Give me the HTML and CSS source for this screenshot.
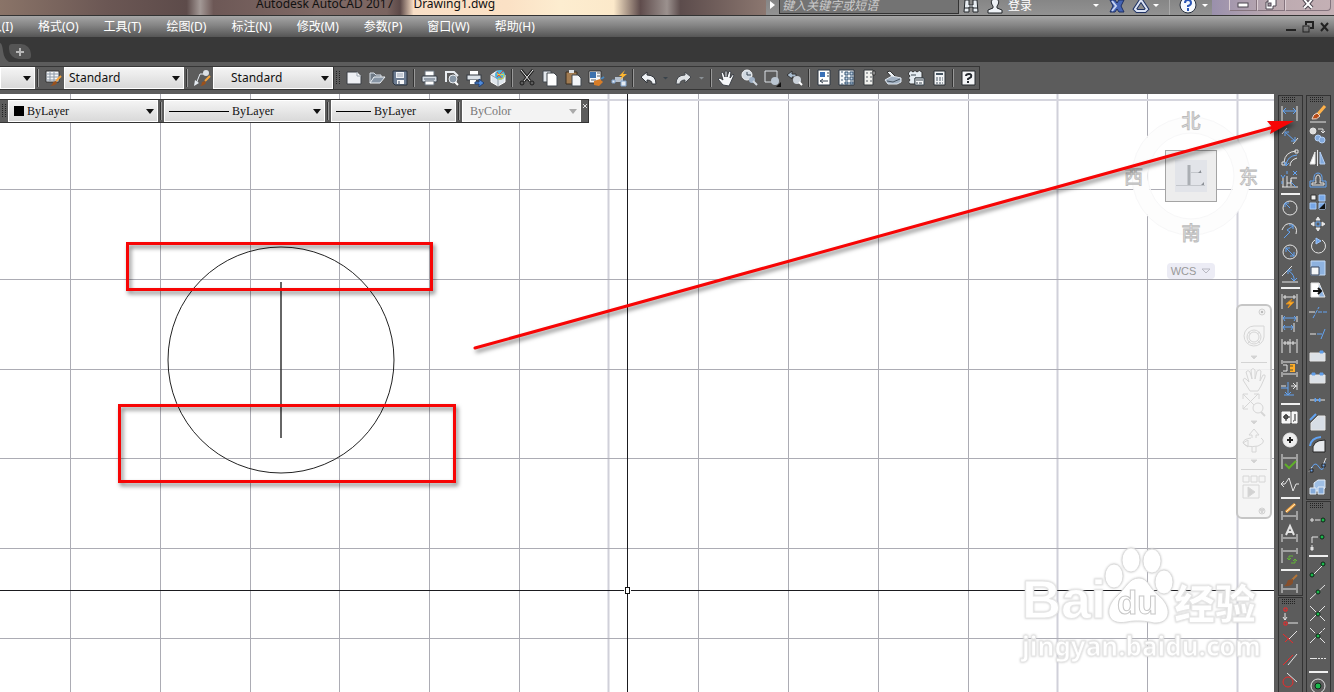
FILE: index.html
```html
<!DOCTYPE html>
<html lang="zh-CN">
<head>
<meta charset="utf-8">
<title>Autodesk AutoCAD 2017 - Drawing1.dwg</title>
<link rel="stylesheet" href="styles.css">
</head>
<body>
<div class="app">
  <header class="titlebar">
    <div class="caption"><span>Autodesk AutoCAD 2017</span><span>Drawing1.dwg</span></div>
    <div class="infocenter">
      <button class="expand" aria-label="展开"><svg width="5" height="8"><path d="M0 0L5 4L0 8z" fill="#fff"/></svg></button>
      <input class="search" type="text" placeholder="键入关键字或短语" aria-label="键入关键字或短语">
      <button class="info" aria-label="搜索"><svg width="16" height="16" viewBox="0 0 16 16"><path d="M2 2h4v5h4V2h4l1 12h-5V9H6v5H1z" fill="#e8edf2" stroke="#23272b"/><path d="M1 10h5M10 10h5" stroke="#23272b"/></svg></button>
      <button class="info login"><svg width="16" height="16" viewBox="0 0 16 16"><path d="M8 1c5 0 4 5 2 7v2l5 2v3H1v-3l5-2V8C4 6 3 1 8 1z" fill="#eef2f6" stroke="#23272b"/></svg><span>登录</span></button>
      <i class="caret push"></i>
      <button class="info" aria-label="Exchange"><svg width="18" height="16" viewBox="0 0 18 16"><path d="M2 2h5l2 3 2-3h5l-3 6 3 6h-5l-2-3-2 3H2l3-6z" fill="#4564b4" stroke="#1e2f61"/><path d="M4 3l4 5-4 5" stroke="#c4d2f2" stroke-width="2" fill="none"/></svg></button>
      <button class="info" aria-label="A360"><svg width="18" height="16" viewBox="0 0 18 16"><path d="M9 2l6 9-2 2H5l-2-2z" fill="none" stroke="#203364" stroke-width="4"/><path d="M9 2l6 9-2 2H5l-2-2z" fill="none" stroke="#dce4f5" stroke-width="2"/></svg></button>
      <i class="caret"></i><i class="rule"></i>
      <button class="info" aria-label="帮助"><svg width="18" height="18" viewBox="0 0 18 18"><circle cx="9" cy="8" r="8" fill="#f6f9fd" stroke="#27303e"/><path d="M6 6q0-3 3-3t3 3q0 2-3 3v1M9 11v3" fill="none" stroke="#2a55b5" stroke-width="2"/></svg></button>
      <i class="caret"></i>
    </div>
    <div class="window-buttons">
      <button aria-label="最小化"><svg width="12" height="8"><rect x="1" y="2" width="10" height="4" fill="#fff" stroke="#4d4650"/></svg></button>
      <button aria-label="还原"><svg width="14" height="12"><path d="M4 0h8v7H9v3H2V3h2z" fill="#fff" stroke="#4d4650"/><rect x="4" y="4" width="3" height="3" fill="#a99aa6" stroke="#4d4650"/></svg></button>
      <button class="wide" aria-label="关闭"><svg width="14" height="12"><path d="M3 9l4-4 4 4M3 0l4 5 4-5" fill="none" stroke="#4d4650" stroke-width="4"/><path d="M3 9l4-4 4 4M3 0l4 5 4-5" fill="none" stroke="#fff" stroke-width="2"/></svg></button>
    </div>
  </header>

  <nav class="menubar">
    <a class="cut" href="#">插入(I)</a><a href="#">格式(O)</a><a href="#">工具(T)</a><a href="#">绘图(D)</a><a href="#">标注(N)</a><a href="#">修改(M)</a><a href="#">参数(P)</a><a href="#">窗口(W)</a><a href="#">帮助(H)</a>
    <div class="doc-buttons">
      <button aria-label="最小化"><svg width="12" height="12"><path d="M1 9h10" stroke="#222" stroke-width="2"/></svg></button>
      <button aria-label="还原"><svg width="12" height="12"><path d="M4 4V1h7v6H8" fill="none" stroke="#222" stroke-width="2"/><rect x="1" y="5" width="6" height="6" fill="none" stroke="#222"/></svg></button>
      <button aria-label="关闭"><svg width="12" height="12"><path d="M2 2l7 8M9 2l-7 8" stroke="#222" stroke-width="2"/></svg></button>
    </div>
  </nav>

  <div class="tabs">
    <svg class="tab-edge" width="9" height="25"><path d="M0 6q2 0 3 8t6 11H0z" fill="#5c5c5c"/></svg>
    <button class="new-tab" aria-label="新图形"><svg width="10" height="10"><path d="M5 1v8M1 5h8" stroke="#b8b8b8" stroke-width="2"/></svg></button>
  </div>

  <div class="toolbar">
    <div class="styles-bar">
      <div class="combo stub"><select aria-label="标注样式"><option></option></select></div>
      <i class="sep"></i>
      <button class="tool" aria-label="表格样式"><svg viewBox="0 0 18 18"><path d="M2 2h13v11H2z" fill="#f3f5f7" stroke="#333"/><path d="M2 5h13M2 8h13M2 11h13M6 2v11M10 2v11" stroke="#8c98a5"/><path d="M17 7l-5 5" stroke="#f5a33c" stroke-width="2"/><path d="M6 17q3-1 3-4l3-1 1 2q-2 3-7 3z" fill="#9a511c"/></svg></button>
      <div class="combo text"><select aria-label="表格样式"><option>Standard</option></select></div>
      <i class="sep"></i>
      <button class="tool" aria-label="多重引线样式"><svg viewBox="0 0 18 18"><path d="M3 15L7 5h4" fill="none" stroke="#e6ecf2" stroke-width="1"/><path d="M1 17l1-6 4 3z" fill="#e6ecf2"/><circle cx="13" cy="4" r="3" fill="#dbe0e5"/><path d="M17 7l-5 5" stroke="#f5a33c" stroke-width="2"/><path d="M7 17q2-1 2-4l3-1 1 2q-2 3-6 3z" fill="#9a511c"/></svg></button>
      <div class="combo text indent"><select aria-label="多重引线样式"><option>Standard</option></select></div>
    </div>
    <div class="standard-bar">
      <i class="grip"></i>
      <button class="tool" aria-label="新建"><svg viewBox="0 0 18 18"><path d="M2 3h10l4 4v8H2z" fill="#eef0f4" stroke="#3a3f45"/><path d="M12 3v4h4" fill="#fff" stroke="#9ca5b0"/></svg></button>
      <button class="tool" aria-label="打开"><svg viewBox="0 0 18 18"><path d="M2 14V4h4l2 2h5v3" fill="#6f7a86" stroke="#d6dde5"/><path d="M2 14l4-6h11l-5 6z" fill="#8795a5" stroke="#eef2f6"/></svg></button>
      <button class="tool" aria-label="保存"><svg viewBox="0 0 18 18"><path d="M2 2h14v14H4l-2-2z" fill="#6c7c92" stroke="#26303d"/><path d="M5 3h8v6H5z" fill="#eef1f5"/><path d="M6 5h6M6 7h6" stroke="#98a3b2"/><path d="M6 11h7v4H6z" fill="#f5f7f9"/><path d="M8 12v3" stroke="#34435a"/></svg></button>
      <i class="sep"></i>
      <button class="tool" aria-label="打印"><svg viewBox="0 0 18 18"><path d="M5 2h9v5H5z" fill="#fff" stroke="#66717d"/><rect x="2" y="7" width="15" height="6" rx="1" fill="#d5dce4" stroke="#343a42"/><path d="M5 12h9v4H5z" fill="#fff" stroke="#66717d"/><path d="M4 10h11" stroke="#536172"/></svg></button>
      <button class="tool" aria-label="打印预览"><svg viewBox="0 0 18 18"><path d="M3 13V3h8l4 4" fill="none" stroke="#e9edf1" stroke-width="2"/><circle cx="10" cy="10" r="4" fill="#8796a5" stroke="#e9edf1"/><path d="M12 13l3 3" stroke="#fff" stroke-width="2"/></svg></button>
      <button class="tool" aria-label="发布"><svg viewBox="0 0 18 18"><path d="M4 2h8v4H4z" fill="#fff"/><rect x="1" y="6" width="14" height="5" fill="#dce2e8" stroke="#343a42"/><path d="M4 11h6v4H4z" fill="#fff"/><path d="M9 13h4v-3l5 4-5 4v-3H9z" fill="#4f8bdc" stroke="#203f73"/></svg></button>
      <button class="tool" aria-label="三维打印"><svg viewBox="0 0 18 18"><path d="M2 6l6-4 8 4v7l-7 4-7-4z" fill="#dfe6ed" stroke="#fff"/><path d="M2 6l7 4v7" fill="none" stroke="#8e9aa6"/><circle cx="11" cy="6" r="5" fill="#49b1dd"/><path d="M8 3l5 7M14 2l-6 6" stroke="#e9442b"/><path d="M9 10q6 1 6-4M8 5q3 2 7 0" fill="none" stroke="#f6dd32"/></svg></button>
      <i class="sep"></i>
      <button class="tool" aria-label="剪切"><svg viewBox="0 0 18 18"><path d="M3 1l9 11M15 1L6 12" stroke="#222" stroke-width="3"/><path d="M3 1l9 11M15 1L6 12" stroke="#eee"/><circle cx="4" cy="14" r="2" fill="none" stroke="#1d1d1d" stroke-width="1"/><circle cx="14" cy="14" r="2" fill="none" stroke="#1d1d1d" stroke-width="1"/></svg></button>
      <button class="tool" aria-label="复制"><svg viewBox="0 0 18 18"><path d="M2 2h8v11H2z" fill="#e2e7ec" stroke="#41464c"/><path d="M6 4h7l3 3v10H6z" fill="#fff" stroke="#41464c"/></svg></button>
      <button class="tool" aria-label="粘贴"><svg viewBox="0 0 18 18"><path d="M2 3h11v12H2z" fill="#a27c52" stroke="#3b2e20"/><path d="M5 1h5v3H5z" fill="#dde1e5"/><path d="M8 6h6l3 3v8H8z" fill="#f3f5f8" stroke="#41464c"/></svg></button>
      <button class="tool" aria-label="特性匹配"><svg viewBox="0 0 18 18"><path d="M2 2h12v12H2z" fill="#f4f6f8" stroke="#333"/><path d="M3 3h6v6H3z" fill="#3b71ae"/><path d="M10 4h3M10 7h3M4 11h5" stroke="#56606a"/><path d="M7 12l6-2 3 3-4 4-5-1z" fill="#d77d28"/><path d="M14 10l3-2" stroke="#4b88bf" stroke-width="2"/></svg></button>
      <button class="tool" aria-label="块编辑器"><svg viewBox="0 0 18 18"><path d="M5 8h8v5H5z" fill="#b5c0cd"/><path d="M2 11h3v3H2zM11 12h5v5h-5z" fill="#e4eaf1" stroke="#7fa0c9"/><path d="M15 1l-6 6h3l-2 4 7-6h-4z" fill="#ffb62f"/></svg></button>
      <i class="sep"></i>
      <button class="tool" aria-label="放弃"><svg viewBox="0 0 18 18"><path d="M2 8l6-5v3q9 0 9 9h-4q0-4-5-4v3z" fill="#f0f3f6" stroke="#30343a"/></svg></button>
      <button class="drop" aria-label="放弃列表"><i class="caret dark"></i></button>
      <button class="tool" aria-label="重做"><svg viewBox="0 0 18 18"><path d="M16 8l-6-5v3q-9 0-9 9h4q0-4 5-4v3z" fill="#dfe2e5" stroke="#44484d"/></svg></button>
      <button class="drop" aria-label="重做列表"><i class="caret dim"></i></button>
      <i class="sep"></i>
      <button class="tool" aria-label="平移"><svg viewBox="0 0 18 18"><path d="M6 16l-5-6 2-1 3 2-2-7 2-1 2 5V2h2v6l2-6 2 1-1 6 3-4 1 1-4 9-1 2z" fill="#f5f7f9" stroke="#3d4147"/></svg></button>
      <button class="tool" aria-label="实时缩放"><svg viewBox="0 0 18 18"><circle cx="7" cy="6" r="5" fill="#d2dae2" stroke="#f5f7f9"/><path d="M7 3v3h4" stroke="#394653" fill="none"/><circle cx="12" cy="11" r="3" fill="#9fb1c6"/><path d="M13 12l4 4" stroke="#d4dae1" stroke-width="2"/></svg></button>
      <button class="tool" aria-label="窗口缩放"><svg viewBox="0 0 18 18"><path d="M2 2h12v11H2z" fill="none" stroke="#dbe0e6"/><circle cx="12" cy="12" r="4" fill="#bac5d1"/><path d="M18 13v5h-5z" fill="#111"/></svg></button>
      <button class="tool" aria-label="缩放上一个"><svg viewBox="0 0 18 18"><path d="M1 6l5-4v3h4v3H6v2z" fill="#a9bccf" stroke="#333"/><circle cx="11" cy="11" r="4" fill="#cbd2da"/><path d="M13 13l3 3" stroke="#fff" stroke-width="2"/></svg></button>
      <i class="sep"></i>
      <button class="tool" aria-label="特性"><svg viewBox="0 0 18 18"><path d="M3 1h12v15H3z" fill="#fff" stroke="#2d3743"/><path d="M5 3h5v5H5z" fill="#3970b7"/><path d="M12 4h2M12 7h2M6 12h7M5 12l3-2M5 12l3 2" stroke="#384452"/></svg></button>
      <button class="tool" aria-label="设计中心"><svg viewBox="0 0 18 18"><path d="M1 1h15v15H1z" fill="#f5f7f9" stroke="#2d3743"/><path d="M4 2v14" stroke="#49637d" stroke-dasharray="2 2"/><path d="M7 3h3v3H7zM12 3h3v3h-3zM7 8h3v3H7zM12 8h3v3h-3zM7 13h3v2H7zM12 13h3v2h-3z" fill="#c6d7e9" stroke="#345371"/></svg></button>
      <button class="tool" aria-label="工具选项板"><svg viewBox="0 0 18 18"><path d="M3 1h9v15H3z" fill="#f1f1ed" stroke="#35393d"/><path d="M5 3h2v2H5zM9 3h2v2H9zM5 7h2v2H5zM9 7h2v2H9zM5 11h2v2H5zM9 11h2v2H9z" fill="#a3a6a8"/><path d="M12 2h2v4h-2z" fill="#ddd" stroke="#333"/></svg></button>
      <button class="tool" aria-label="图纸集管理器"><svg viewBox="0 0 18 18"><path d="M3 3l3-1 7 7-3 2z" fill="#eef2f5" stroke="#333"/><path d="M1 11l7-4 9 2v4l-4 2H4z" fill="#a1b0c1" stroke="#e1e7ee"/><path d="M3 12l6 1 7-3" fill="none" stroke="#44515e"/></svg></button>
      <button class="tool" aria-label="标记集管理器"><svg viewBox="0 0 18 18"><path d="M2 3q2-3 4 0 2-3 4 0 2-3 5 0v6H8v6H3q-3-2 0-4-3-2 0-4-3-2-1-4z" fill="#e5ecf2" stroke="#333"/><path d="M8 9h9v7H8z" fill="#f5f6f8" stroke="#38444f"/><path d="M9 11h7M9 14h2M12 14h3M4 6h5" stroke="#38444f"/></svg></button>
      <button class="tool" aria-label="快速计算器"><svg viewBox="0 0 18 18"><path d="M4 2h11v14H4z" fill="#f1f3f5" stroke="#292e34"/><path d="M6 5h7" stroke="#465562" stroke-width="2"/><path d="M6 9h7M6 11h7M6 14h7" stroke="#465562" stroke-dasharray="2 1"/></svg></button>
      <i class="sep"></i>
      <button class="tool" aria-label="帮助"><svg viewBox="0 0 18 18"><path d="M3 2h13v14H3z" fill="#f4f5f7" stroke="#24282d" stroke-width="1"/><path d="M7 7q0-2 3-2t2 3l-3 2v1M9 12v2" fill="none" stroke="#252a30" stroke-width="2"/></svg></button>
    </div>
  </div>

  <main class="workspace">
    <section class="canvas" aria-label="绘图区">
      <svg class="drawing">
        <g transform="translate(0 -94)">
          <g stroke="#acacb4">
            <path d="M70.500 94v1200M160.500 94v1200M250.500 94v1200M339.500 94v1200M429.500 94v1200M519.500 94v1200M698.500 94v1200M788.500 94v1200M878.500 94v1200M968.500 94v1200M1147.500 94v1200"/>
            <path d="M608.500 94v1200M1057.500 94v1200M1237.500 94v1200" stroke="#d0d0d9" stroke-width="2"/>
            <path d="M0 189.500h3000M0 279.500h3000M0 369.500h3000M0 458.500h3000M0 548.500h3000M0 638.500h3000"/>
            <path d="M0 100h3000" stroke="#d6d6de" stroke-width="2"/>
          </g>
          <path d="M627.500 94V587M627.500 594v1000M0 590.500h624M631 590.500h3000" stroke="#1b1b1f"/>
          <rect x="625.500" y="587.500" width="4" height="6" fill="#fff" stroke="#111"/>
          <circle cx="281" cy="360" r="113" fill="none" stroke="#222" stroke-width="1"/>
          <path d="M281 282v156" stroke="#333" stroke-width="1.500"/>
        </g>
      </svg>

      <div class="properties-bar">
        <i class="grip"></i>
        <div class="combo prop color"><span class="swatch"></span><select aria-label="颜色"><option>ByLayer</option></select></div>
        <i class="sep"></i>
        <div class="combo prop linetype"><span class="stroke"></span><select aria-label="线型"><option>ByLayer</option></select></div>
        <i class="sep"></i>
        <div class="combo prop weight"><span class="stroke short"></span><select aria-label="线宽"><option>ByLayer</option></select></div>
        <i class="sep"></i>
        <div class="combo prop plot"><select aria-label="打印样式" disabled><option>ByColor</option></select></div>
        <button class="close" aria-label="关闭"><svg width="6" height="6"><path d="M1 1l4 4M5 1l-4 4" stroke="#ddd"/></svg></button>
      </div>

      <div class="viewcube">
        <svg class="ring" viewBox="0 0 120 120"><circle cx="60" cy="60" r="51" fill="none" stroke="#fdfdfd" stroke-width="15"/><circle cx="60" cy="60" r="59" fill="none" stroke="#f7f7f8"/><circle cx="60" cy="60" r="43" fill="none" stroke="#f7f7f8"/></svg>
        <button class="north">北</button><button class="west">西</button>
        <button class="top" aria-label="上"><svg viewBox="0 0 32 32"><path d="M14 5v20" stroke="#aaaeb3" stroke-width="3"/><path d="M16 12.500h11M1 25.500h29" stroke="#c3c6cb"/><path d="M23 13l3-3v3zM26 25l3-3v3z" fill="#8b8f95"/></svg></button>
        <button class="east">东</button><button class="south">南</button>
        <button class="wcs">WCS <svg width="10" height="6"><path d="M1 1h8L5 5z" fill="none" stroke="#b9b9c2"/></svg></button>
      </div>

      <div class="navbar">
        <button class="mini" aria-label="关闭"><svg width="8" height="8"><circle cx="4" cy="4" r="3" fill="#eee" stroke="#d2d2d2"/><path d="M3 3l2 2M5 3L3 5" stroke="#bbb"/></svg></button>
        <button aria-label="全导航控制盘"><svg width="24" height="42" viewBox="0 0 24 42"><path d="M12 9h10v11a10 10 0 1 1-10-11z"/><circle cx="12" cy="20" r="7"/><circle cx="12" cy="20" r="5"/><path d="M6 15l3 2M15 23l3 3M18 15l-3 2M9 23l-3 3"/><path class="solid" d="M9 39h6l-3 3z"/></svg></button>
        <hr>
        <button aria-label="平移"><svg width="24" height="27" viewBox="0 0 24 27"><path d="M8 25L1 14q1-3 3-1l3 3L4 6q2-3 4 0l2 7-1-9q2-3 4 0v9l2-8q3-2 4 0l-1 10 3-6q3-1 2 2l-4 9-3 5z"/></svg></button>
        <button aria-label="缩放"><svg width="24" height="32" viewBox="0 0 24 32"><path d="M1 6V1h5M12 1h5v5M1 12v4h5M1 1l15 15M16 1L1 16"/><circle cx="16" cy="15" r="5"/><path d="M19 19l4 4" stroke-width="2"/><path class="solid" d="M9 28h6l-3 3z"/></svg></button>
        <button aria-label="动态观察"><svg width="24" height="41" viewBox="0 0 24 41"><path d="M12 4l5 6h-3v17h-4V10H7z"/><path d="M9 13q-8 1-8 5 3 5 15 3 9-4 3-8M1 18l5-3v7z"/><path class="solid" d="M9 35h6l-3 3z"/></svg></button>
        <hr>
        <button aria-label="ShowMotion"><svg width="24" height="28" viewBox="0 0 24 28"><path d="M1 3h6v6H1zM9 3h6v6H9zM17 3h6v6h-6zM1 12h16v13H1z"/><path class="solid" d="M6 14l7 5-7 5z"/></svg></button>
        <button class="mini bottom" aria-label="自定义"><svg width="8" height="8"><circle cx="4" cy="4" r="3" fill="#eee" stroke="#d2d2d2"/><path d="M2 3h4M3 5h2" stroke="#bbb"/></svg></button>
      </div>

      <div class="watermark">
        <div class="brand"><span class="latin">Bai</span><span class="paw"><svg viewBox="0 0 72 80"><ellipse cx="12" cy="30" rx="9" ry="12"/><ellipse cx="29" cy="14" rx="9" ry="12"/><ellipse cx="50" cy="15" rx="9" ry="12"/><ellipse cx="62" cy="36" rx="9" ry="12"/><path d="M37 32c9 0 10 10 19 17 15 12 13 29-4 28-8-2-18-3-27-1C4 80 2 62 15 50c9-8 12-18 22-18z"/></svg><b>du</b></span><span class="cn">经验</span></div>
        <div class="url">jingyan.baidu.com</div>
      </div>
    </section>

    <aside class="docks">
      <div class="dock">
        <div class="panel">
          <i class="grip wide"></i>
          <button aria-label="线性"><svg viewBox="0 0 22 22"><path d="M3 3v15M18 3v15"/><path class="b" d="M4 8h13M7 5L4 8l3 3M14 5l3 3-3 3"/></svg></button>
          <button aria-label="对齐"><svg viewBox="0 0 22 22"><path d="M3 9l5-6M14 19l5-6"/><path class="b" d="M6 7l10 9M6 11V7h4M16 12v4h-4"/></svg></button>
          <button aria-label="弧长"><svg viewBox="0 0 22 22"><path d="M5 15Q6 5 17 4M11 19q0-6 7-8"/><path d="M3 15h3v3H3zM16 3h3v3h-3z"/><path class="b" d="M7 18Q8 9 18 8M5 15l2 4 3-3"/></svg></button>
          <button aria-label="坐标"><svg viewBox="0 0 22 22"><path d="M4 18V9M8 18V7M3 18h16M8 14h4v-3M12 17V9h6"/><path class="b" d="M2 6l2 3 2-3M14 2l4 4M18 2l-4 4M8 2v3M3 12v3M12 13l5 5"/></svg></button>
          <hr>
          <button aria-label="半径"><svg viewBox="0 0 22 22"><circle cx="11" cy="11" r="7"/><path class="b" d="M6 6l5 5M6 10V6h4"/></svg></button>
          <button aria-label="折弯"><svg viewBox="0 0 22 22"><path d="M3 11q3-8 10-6 6 3 4 10"/><path class="b" d="M5 19l6-6-3-2 6-4M10 6h4v4"/></svg></button>
          <button aria-label="直径"><svg viewBox="0 0 22 22"><circle cx="11" cy="11" r="7"/><path class="b" d="M7 7l8 8M7 11V7h4M15 11v4h-4"/></svg></button>
          <button aria-label="角度"><svg viewBox="0 0 22 22"><path d="M3 19h16M3 13L13 3"/><path class="b" d="M10 8q6 4 5 10M9 11V7h4M12 15l3 3 3-3"/></svg></button>
          <hr>
          <button aria-label="快速标注"><svg viewBox="0 0 22 22"><path d="M3 3v15M18 3v15M4 6h13M6 4v4M15 4v4"/><path d="M13 8l-6 5h4l-2 4 6-6h-4z" fill="#ffad29" stroke="#d68a20"/></svg></button>
          <button aria-label="基线"><svg viewBox="0 0 22 22"><path d="M3 2v17M18 3v6M15 10v9"/><path class="b" d="M4 5h13M6 3L4 5l2 3M15 3l2 2-2 3M4 14h10M6 12l-2 2 2 3M12 12l2 2-2 3"/></svg></button>
          <button aria-label="连续"><svg viewBox="0 0 22 22"><path d="M3 4v14M11 4v14M18 4v14M4 8h13M6 6v4M9 6v4M14 6v4"/></svg></button>
          <button aria-label="等距标注"><svg viewBox="0 0 22 22"><path d="M3 3v4M18 3v4M3 15v5M18 15v5M4 5h13M4 17h13M4 8h4v6H4"/><path d="M12 8h3v6h-3z" fill="#ffad29" stroke="#ffad29" stroke-width="2"/><path d="M11 9h3M11 13h3" stroke="#553"/></svg></button>
          <button aria-label="折断标注"><svg viewBox="0 0 22 22"><path d="M2 7h5M12 7h6M14 4l3 3-3 3M18 3v8"/><path class="b" d="M9 3v13M2 9h7M5 16h10M6 13l3 3 3-3"/></svg></button>
          <hr>
          <button aria-label="公差"><svg viewBox="0 0 22 22"><path d="M3 5h8v11H3zM13 5h5v11h-5z" fill="#f4f4f4" stroke="#fff"/><path d="M7 7v7M4 10h7M16 7v7M14 14h1" stroke="#222"/><circle cx="7" cy="10" r="2" stroke="#222"/></svg></button>
          <button aria-label="圆心标记"><svg viewBox="0 0 22 22"><circle cx="11" cy="11" r="7" fill="#eee"/><path d="M11 8v6M8 11h6" stroke="#222" stroke-width="2"/></svg></button>
          <button aria-label="检验"><svg viewBox="0 0 22 22"><path d="M3 3v15M18 3v15M4 7h13"/><path d="M6 13l4 4 7-7" stroke="#5fae29" stroke-width="2"/></svg></button>
          <button aria-label="折弯线性"><svg viewBox="0 0 22 22"><path d="M2 11h4l4-6 4 13 3-7h3M5 8l-3 3 3 3"/></svg></button>
          <hr>
          <button aria-label="编辑标注"><svg viewBox="0 0 22 22"><path d="M3 10v9M18 10v9M4 15h13"/><path d="M7 11l9-8" stroke="#f4a03a" stroke-width="3"/><path d="M7 11l9-8" stroke="#fff1cc"/></svg></button>
          <button aria-label="编辑标注文字"><svg viewBox="0 0 22 22"><path d="M3 11v8M18 11v8M4 15h13"/><path d="M7 12l4-9 4 9M8 9h6" stroke-width="2"/></svg></button>
          <button aria-label="标注更新"><svg viewBox="0 0 22 22"><path d="M3 3v15M18 3v6M4 6h13"/><path d="M14 11h-4v4M12 18h4v-4M8 13l2 2 2-2M14 16l2-2 2 2" stroke="#62b338"/></svg></button>
          <hr>
          <button aria-label="标注样式"><svg viewBox="0 0 22 22"><path d="M3 11v9M18 11v9M4 16h13"/><path d="M12 8l6-6" stroke="#b37539" stroke-width="2"/><path d="M5 13q3-2 4-6l5-1v4q-3 4-9 3z" fill="#874f2b" stroke="none"/></svg></button>
        </div>
        <div class="panel">
          <i class="grip wide"></i>
          <button aria-label="临时追踪点"><svg viewBox="0 0 22 22"><path d="M6 8v7M4 12l2 3 2-3M9 18h10"/><path class="r" d="M5 3h3v3H5zM5 17h3v3H5z"/></svg></button>
          <button aria-label="捕捉自"><svg viewBox="0 0 22 22"><path d="M10 12l8-8"/><path class="r" d="M4 7l10 9M6 15l4-4"/></svg></button>
          <button aria-label="端点"><svg viewBox="0 0 22 22"><path d="M9 16L18 5"/><path class="r" d="M4 16l10-10"/></svg></button>
          <button aria-label="中点"><svg viewBox="0 0 22 22"><path d="M8 2l10 9"/><circle class="r" cx="9" cy="11" r="5"/></svg></button>
        </div>
      </div>
      <div class="dock">
        <div class="panel">
          <i class="grip wide"></i>
          <button aria-label="删除"><svg viewBox="0 0 22 22"><path d="M3 19h16"/><path d="M11 11l7-8" stroke="#ffb14a" stroke-width="3"/><path d="M5 16q1-5 5-6l3 3q-3 4-8 3z" fill="#b94b17" stroke="#e9d8cd"/></svg></button>
          <button aria-label="复制"><svg viewBox="0 0 22 22"><circle cx="6" cy="6" r="3" fill="#ddd"/><circle cx="11" cy="13" r="3" fill="#82a9dc" stroke="#b6d0f4"/><circle cx="15" cy="15" r="3" fill="#82a9dc" stroke="#b6d0f4"/><path d="M11 4h5v4M14 6l2 2 2-2"/></svg></button>
          <button aria-label="镜像"><svg viewBox="0 0 22 22"><path d="M8 5v12H3z" fill="#fff"/><path d="M13 5v12h5z" fill="#82a9dc" stroke="#b6d0f4"/><path d="M10.500 3v16"/></svg></button>
          <button aria-label="偏移"><svg viewBox="0 0 22 22"><path class="b" d="M3 18v-6h4q-1-8 4-8t4 8h4v6z"/><path d="M5 16v-2h4q-1-8 2-8t2 8h4v2z"/></svg></button>
          <button aria-label="阵列"><svg viewBox="0 0 22 22"><path d="M4 4h5v5H4z" fill="#eee" stroke="#333"/><path d="M12 4h6v6h-6zM3 12h6v6H3zM12 12h6v6h-6z" fill="#77a6e5" stroke="#a9caf5"/><path d="M18 12v6h-6z" fill="#111" stroke="none"/></svg></button>
          <button aria-label="移动"><svg viewBox="0 0 22 22"><path d="M11 4l2 3H9zM11 18l2-3H9zM4 11l3-2v4zM18 11l-3-2v4z" fill="#eee"/><path class="b" d="M9 9h4v4H9z"/></svg></button>
          <button aria-label="旋转"><svg viewBox="0 0 22 22"><path d="M8 5a7 7 0 1 0 7 0"/><path d="M9 3l5 3-5 3z" fill="#6ea2e8" stroke="#9fc4f6"/></svg></button>
          <button aria-label="缩放"><svg viewBox="0 0 22 22"><path d="M4 4h14v14H4z" fill="#8eb2df" stroke="#c5dcf7"/><path d="M4 10h8v8H4z" fill="#f4f6f8" stroke="#34435a"/></svg></button>
          <button aria-label="拉伸"><svg viewBox="0 0 22 22"><path d="M4 4h8v14H4z" fill="#fff"/><path d="M12 4l6 14h-6z" fill="#8eb2df"/><path d="M6 12h8M11 9l3 3-3 3" stroke="#111" stroke-width="2"/></svg></button>
          <button aria-label="修剪"><svg viewBox="0 0 22 22"><path d="M2 11h6"/><path class="b" d="M6 17l6-11M11 11h10" stroke-dasharray="4 1"/></svg></button>
          <button aria-label="延伸"><svg viewBox="0 0 22 22"><path d="M3 11h6"/><path class="b" d="M10 11h5M14 16l4-10"/></svg></button>
          <button aria-label="打断于点"><svg viewBox="0 0 22 22"><path d="M3 8h15v8H3z" fill="#dce1e7"/><path d="M13 6h3v2h-3z" fill="#609ee9" stroke="#609ee9"/></svg></button>
          <button aria-label="打断"><svg viewBox="0 0 22 22"><path d="M3 8h15v8H3z" fill="#dce1e7"/><path d="M5 6h3v2H5zM13 6h3v2h-3z" fill="#609ee9" stroke="#609ee9"/></svg></button>
          <button aria-label="合并"><svg viewBox="0 0 22 22"><path d="M3 11h15"/><path d="M8 9l2 2-2 2zM13 9l-2 2 2 2z" fill="#609ee9" stroke="#609ee9"/></svg></button>
          <button aria-label="倒角"><svg viewBox="0 0 22 22"><path d="M4 19v-7l7-7h7v14z" fill="#d7dde5"/><path class="b" d="M3 9l6-6" stroke-width="2"/></svg></button>
          <button aria-label="圆角"><svg viewBox="0 0 22 22"><path d="M6 19q-2-12 12-12v12z" fill="#e5e8ec" stroke="#222"/><path class="b" d="M3 13Q4 5 14 4" stroke-width="2"/></svg></button>
          <button aria-label="光顺曲线"><svg viewBox="0 0 22 22"><path class="b" d="M4 14q4-9 8-2t6-5"/><path d="M2 17l3-5M16 10l3-7"/><path d="M3 14h3v3H3zM15 9h3v3h-3z" fill="#71a4e6" stroke="#222"/></svg></button>
          <button aria-label="分解"><svg viewBox="0 0 22 22"><path d="M7 6l4-3h7v8l-4 3H7z" fill="#9fbfe5" stroke="#e3edf8"/><path d="M3 11h6v6H3zM11 10h6v7h-6z" fill="#86abd9" stroke="#e3edf8"/></svg></button>
        </div>
        <div class="panel">
          <i class="grip wide"></i>
          <button aria-label="延长线"><svg viewBox="0 0 22 22"><path d="M4 10h2v2H4zM8 11h6"/><circle class="g" cx="16" cy="11" r="2"/></svg></button>
          <button aria-label="追踪"><svg viewBox="0 0 22 22"><path d="M5 6h9M5 6v9" stroke-dasharray="6 2"/><path d="M4 16h2v3H4z" fill="#ddd"/><circle class="g" cx="15" cy="6" r="2"/></svg></button>
          <hr>
          <button aria-label="端点捕捉"><svg viewBox="0 0 22 22"><path d="M6 16L16 6"/><circle class="g" cx="5" cy="16" r="2"/><circle class="g" cx="16" cy="5" r="2"/></svg></button>
          <button aria-label="中点捕捉"><svg viewBox="0 0 22 22"><path d="M3 18L18 4"/><circle class="g" cx="11" cy="11" r="2"/></svg></button>
          <button aria-label="交点"><svg viewBox="0 0 22 22"><path d="M3 3l15 15M3 18L18 3"/><circle class="g" cx="11" cy="11" r="2"/></svg></button>
          <button aria-label="外观交点"><svg viewBox="0 0 22 22"><path d="M3 3l5 5M13 13l5 5M3 18L18 3" stroke-dasharray="8 1"/><circle class="g" cx="11" cy="11" r="2"/></svg></button>
          <button aria-label="延长"><svg viewBox="0 0 22 22"><path d="M3 11.500h7M11 11.500h2M14 11.500h2M17 11.500h2"/></svg></button>
          <hr>
          <button aria-label="圆心"><svg viewBox="0 0 22 22"><circle cx="11" cy="11" r="7" stroke-width="1"/><circle class="g" cx="11" cy="11" r="3"/></svg></button>
        </div>
      </div>
    </aside>

    <svg class="annotations" aria-hidden="true">
      <g transform="translate(0 -94)" fill="none" stroke="#f70505" stroke-width="3">
        <path d="M127.500 243.500h304v46h-304zM119.500 405.500h335v76h-335z"/>
        <path d="M475 348L1274 127" stroke-linecap="round"/>
        <path d="M1294 121l-27 0 5 6-2 7z" fill="#f70505" stroke="none"/>
      </g>
    </svg>
  </main>
</div>
</body>
</html>
```

FILE: styles.css
```css
* { box-sizing: border-box; }
body { margin: 0; font: 12px/16px "Noto Sans", "Noto Sans CJK SC", sans-serif; color: #111; }
button { padding: 0; border: 0; background: none; font: inherit; color: inherit; display: flex; align-items: center; justify-content: center; flex: none; }
svg { display: block; flex: none; }
a { color: inherit; text-decoration: none; }
select, input { font: inherit; color: inherit; }
.app { height: 100vh; display: flex; flex-direction: column; overflow: hidden; background: #5c5c5c; }

/* Title bar */
.titlebar { flex: none; height: 16px; display: flex; overflow: hidden; border-bottom: 1px solid #333; background: linear-gradient(90deg, #8a7468, #6b5754 8%, #5d4b4a 14%, #a39996 15%, #6d5856 16%, #806a66 24%, #7a6460 29%, #5c4948 30%, #f9dfc6 31%, #fbe1c5 38%, #fdedd0 42%, #fce9ca 46%, #5f4c4c 48%, #9b918e 50%, #5c4c4c 51%, #907b73 58%); }
.caption { flex: 1; display: flex; gap: 20px; padding-left: 256px; line-height: 8px; white-space: nowrap; }
.infocenter { display: flex; width: 446px; padding-right: 4px; background: linear-gradient(#868686, #929292); align-items: flex-start; color: #fff; line-height: 10px; }
.expand { width: 13px; height: 9px; }
.search { width: 180px; height: 18px; margin-top: -4px; border: 1px solid #333; background: #737373; font-style: italic; padding: 0 2px; }
.search::placeholder { color: #ccc; }
.info { height: 12px; width: 24px; overflow: visible; }
.login { width: auto; gap: 5px; margin-left: 4px; }
.caret { width: 6px; height: 3px; margin-top: 4px; background: #fff; clip-path: polygon(0 0, 100% 0, 50% 100%); }
.push { margin-left: auto; margin-right: 6px; }
.dark, .dim { margin: 0; background: #39434b; }
.dim { background: #8b9196; }
.rule { width: 1px; height: 15px; margin: 0 6px 0 10px; background: #aaa; }
.infocenter .caret:last-child { margin-left: 2px; }
.window-buttons { width: 122px; display: flex; padding: 0 3px 3px 17px; background: linear-gradient(90deg, #9a90ac, #bcaab0 50%, #c4b0b5); }
.window-buttons button { width: 28px; height: 11px; border: 1px solid #85747e; border-top: 0; border-left-color: #ddd0d5; overflow: hidden; }
.window-buttons .wide { width: 46px; border-radius: 0 0 4px 0; }

/* Menus and tabs */
.menubar { flex: none; height: 21px; display: flex; align-items: center; gap: 25px; background: linear-gradient(#a6a6a6, #848484 45%, #555); color: #fff; white-space: nowrap; }
.cut { width: 13px; display: flex; justify-content: flex-end; }
.doc-buttons { margin-left: auto; display: flex; gap: 5px; padding-right: 3px; }
.tabs { flex: none; height: 25px; display: flex; align-items: center; background: #383838; }
.new-tab { width: 22px; height: 15px; margin-top: 4px; background: #555; border-radius: 3px 10px 3px 10px; }

/* Toolbars */
.toolbar { flex: none; height: 32px; display: flex; align-items: flex-start; padding-top: 4px; background: #5c5c5c; }
.styles-bar, .standard-bar { display: flex; align-items: center; height: 24px; border: 1px solid #363636; border-left: 0; }
.styles-bar { border-right: 0; }
.standard-bar { border-left: 1px solid #363636; }
.tool { width: 23px; height: 22px; }
.tool svg { width: 18px; height: 18px; }
.drop { width: 13px; height: 22px; }
.sep { flex: none; width: 6px; height: 18px; background: linear-gradient(90deg, transparent 2px, #333 2px 3px, #999 3px 4px, transparent 4px); }
.grip { flex: none; width: 8px; height: 14px; background: repeating-linear-gradient(transparent 0 1px, #5c5c5c 1px 2px), repeating-linear-gradient(90deg, #5c5c5c 0 2px, #222 2px 3px); }
.combo { position: relative; display: flex; align-items: center; height: 22px; border: 1px solid #fff; background: linear-gradient(#f4f4f4, #d9d9d9); }
.combo::after { content: ""; position: absolute; right: 3px; top: 8px; width: 8px; height: 5px; background: #111; clip-path: polygon(0 0, 100% 0, 50% 100%); pointer-events: none; }
.combo select { flex: 1; width: 100%; height: 20px; padding: 0 0 0 4px; border: 0; background: transparent; appearance: none; }
.stub { width: 35px; }
.text { width: 120px; }
.indent select { padding-left: 17px; }

/* Drawing area */
.workspace { position: relative; flex: 1; min-height: 0; display: flex; }
.canvas { position: relative; flex: 1; min-width: 0; background: #fff; overflow: hidden; }
.drawing, .annotations { position: absolute; inset: 0; width: 100%; height: 100%; }
.annotations { pointer-events: none; filter: drop-shadow(2px 3px 2px rgba(0, 0, 0, .5)); }
.properties-bar { position: absolute; left: 0; top: 5px; display: flex; align-items: center; height: 24px; border: 1px solid #333; border-left: 0; background: #5c5c5c; }
.prop { font-family: "Liberation Serif", serif; }
.prop select { padding-left: 3px; }
.color { width: 150px; }
.linetype { width: 161px; }
.weight { width: 125px; }
.plot { width: 119px; background: #f3f3f3; color: #777; }
.plot::after { background: #aaa; }
.plot select { padding-left: 7px; color: #777; opacity: 1; }
.swatch { width: 10px; height: 10px; margin-left: 5px; background: #000; }
.stroke { width: 60px; height: 1px; margin-left: 4px; background: #000; }
.short { width: 35px; }
.close { width: 7px; height: 22px; align-items: flex-start; padding-top: 3px; }

/* View cube */
.viewcube { position: absolute; right: 16px; top: 15px; width: 134px; display: grid; grid-template-columns: 39px 56px 39px; grid-template-rows: 22px 90px 22px 20px; justify-items: center; align-items: center; font-size: 19px; line-height: 22px; }
.ring { position: absolute; left: 7px; top: 7px; width: 120px; height: 120px; }
.viewcube button { position: relative; color: #fff; -webkit-text-stroke: 1px #bcbcbc; font-family: "Noto Sans CJK SC", sans-serif; }
.north, .south { grid-column: 2; }
.west, .top { grid-row: 2; }
.west { grid-column: 1; justify-self: start; }
.east { grid-column: 3; grid-row: 2; justify-self: end; }
.viewcube .top { grid-column: 2; width: 52px; height: 52px; border: 1px solid #a4a4a4; background: #ededed; }
.top svg { width: 32px; height: 32px; background: #e2e4e9; }
.viewcube .wcs { grid-column: 2; grid-row: 4; align-self: end; margin-bottom: -16px; width: 48px; height: 16px; gap: 5px; border-radius: 4px; background: #ececf5; color: #999; font: 11px/16px "Liberation Sans", sans-serif; -webkit-text-stroke: 0; }

/* Navigation bar */
.navbar { position: absolute; right: 2px; top: 210px; width: 36px; padding: 1px 4px; display: flex; flex-direction: column; align-items: center; border: 2px solid #c6c6c6; border-radius: 6px; background: rgba(244, 244, 244, .9); }
.navbar svg { fill: #f5f5f5; stroke: #d6d6d6; }
.navbar .solid { fill: #d2d2d2; }
.navbar hr { width: 26px; height: 1px; margin: 3px 0; border: 0; background: #d4d4d4; }
.navbar .mini { align-self: flex-end; height: 10px; }
.navbar .bottom { margin-top: 5px; }

/* Watermark */
.watermark { position: absolute; right: 12px; bottom: 30px; width: 240px; filter: drop-shadow(0 0 1px #ccc); color: #fff; }
.brand { display: flex; align-items: flex-end; height: 84px; font: bold 54px/50px "Liberation Sans", sans-serif; -webkit-text-stroke: 1px #e6e6e6; }
.latin { width: 80px; }
.paw { position: relative; flex: none; width: 72px; height: 84px; }
.paw svg { width: 72px; height: 80px; fill: #fff; stroke: #dcdcdc; }
.paw b { position: absolute; left: 15px; top: 40px; font: bold 33px/34px "Liberation Sans", sans-serif; -webkit-text-stroke: 1px #c8c8c8; }
.latin, .cn { padding-bottom: 6px; }
.cn { font: 900 41px/46px "Noto Sans CJK SC", sans-serif; }
.url { font: bold 26px/32px "Noto Sans", sans-serif; -webkit-text-stroke: 1px #e6e6e6; white-space: nowrap; }

/* Docked tool columns */
.docks { flex: none; width: 60px; display: flex; gap: 3px; padding-left: 4px; background: #5c5c5c; overflow: hidden; }
.dock { width: 25px; flex: none; display: flex; flex-direction: column; gap: 1px; padding-top: 1px; }
.panel { display: flex; flex-direction: column; align-items: flex-start; border: 1px solid #333; }
.panel button { width: 22px; height: 22px; }
.panel svg { width: 22px; height: 22px; fill: none; stroke: #e4e4e4; }
.panel .b { stroke: #62a3f2; }
.panel .r { stroke: #ee2929; }
.panel .g { fill: #19b84b; stroke: #102417; }
.panel hr { width: 19px; height: 2px; margin: 2px; border: 0; background: #f0f0f0; }
.wide.grip { width: 14px; height: 7px; margin-left: 3px; background: repeating-linear-gradient(90deg, transparent 0 1px, #5c5c5c 1px 2px), repeating-linear-gradient(#5c5c5c 0 1px, #222 1px 2px); }
```
